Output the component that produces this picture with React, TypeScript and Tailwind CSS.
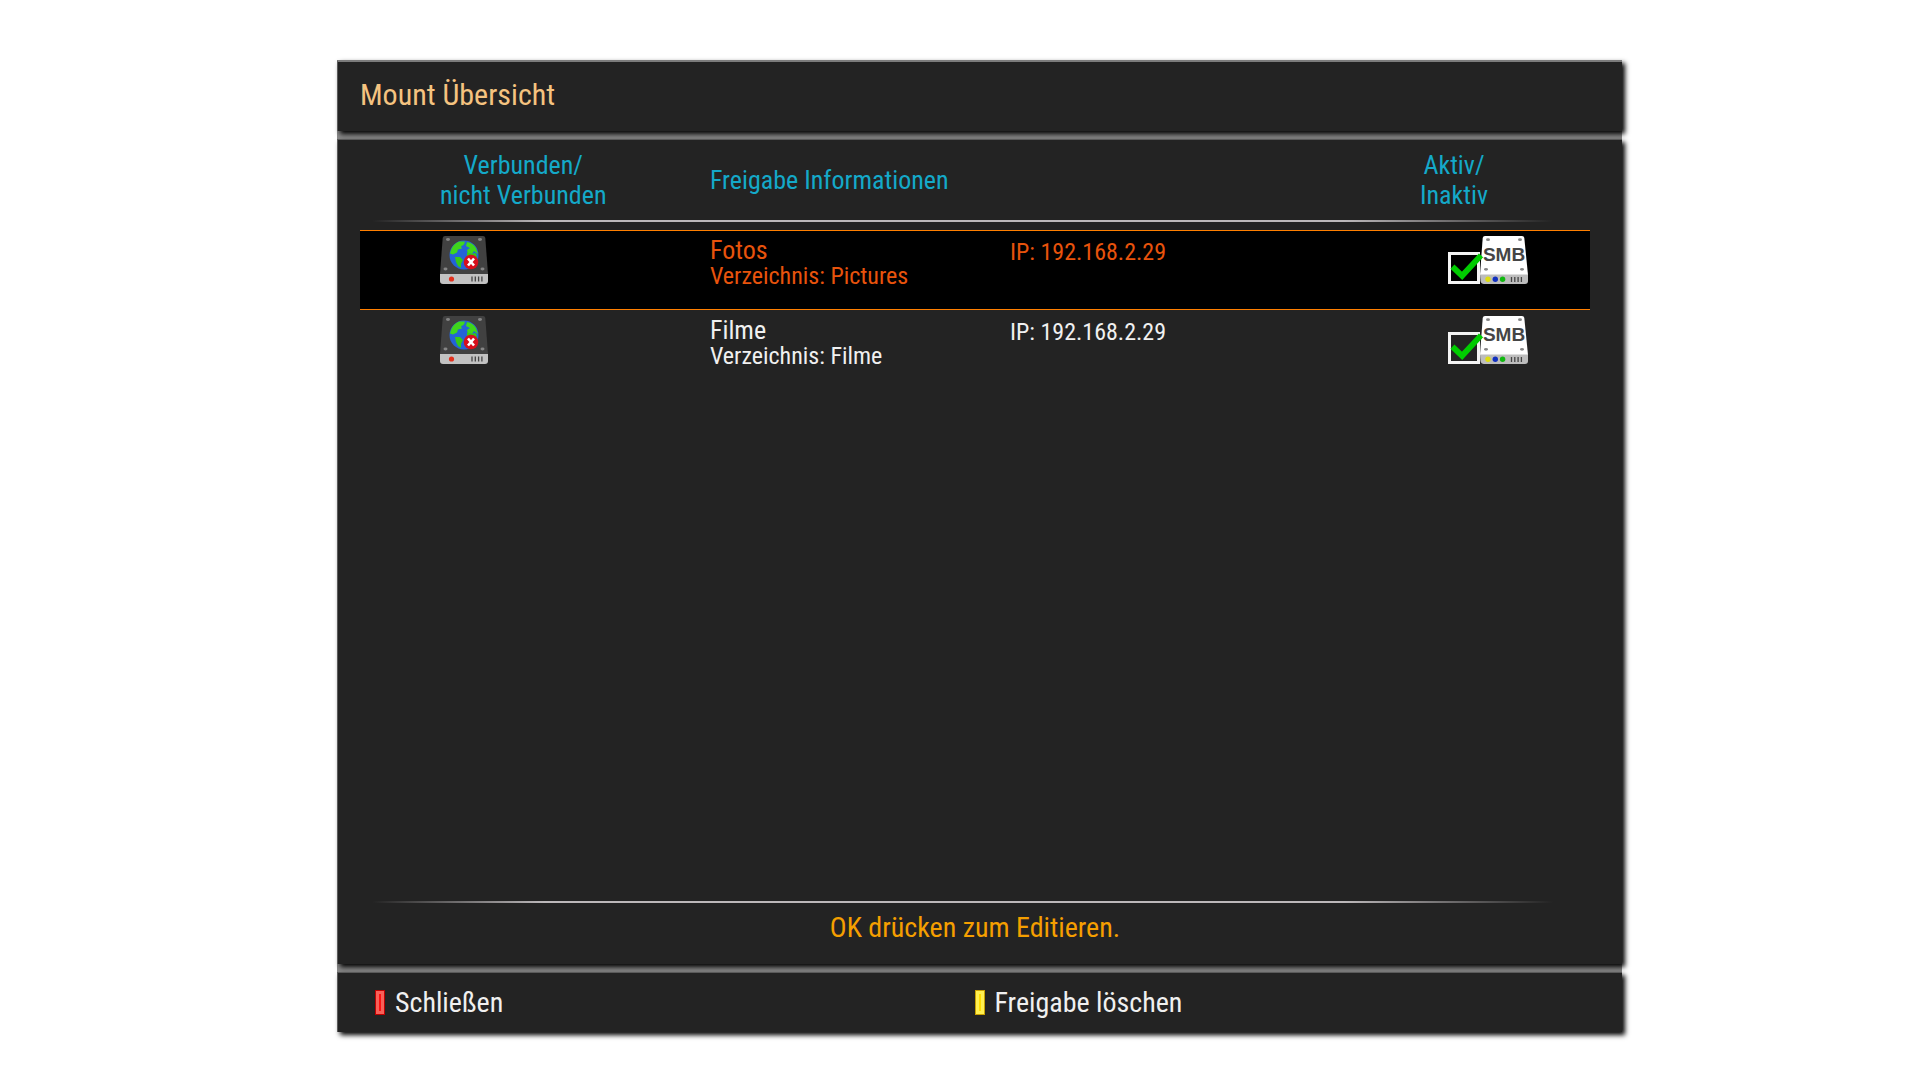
import clsx from 'clsx'
import { useState } from 'react'

const mounts = [
  { name: 'Fotos', directory: 'Pictures', ip: '192.168.2.29' },
  { name: 'Filme', directory: 'Filme', ip: '192.168.2.29' },
]

const panel =
  'relative bg-[#232323] border-l border-l-[#5a5a5a] shadow-[3px_3px_5px_0px_#000000]'

function DriveIcon() {
  return (
    <svg viewBox="0 0 48 48" className="block size-12" aria-label="Nicht verbunden" role="img">
      <path d="M5 0h38q2 0 2.3 2L48 38H0L2.7 2Q3 0 5 0z" fill="#414141" />
      <path d="M0 38h48v7q0 3-3 3H3q-3 0-3-3z" fill="#c2c2c2" />
      <g fill="#858585">
        <ellipse cx="8" cy="3.5" rx="2" ry="1.4" />
        <ellipse cx="40" cy="3.5" rx="2" ry="1.4" />
        <ellipse cx="5.5" cy="33" rx="2" ry="1.4" />
        <ellipse cx="42.5" cy="33" rx="2" ry="1.4" />
      </g>
      <circle cx="24" cy="19" r="14.5" fill="#2463d6" />
      <path d="M11 14q2-6 8-8.500l6 0-1 3-3 2 1 2-4 1-1 3-4 2-3-1z" fill="#3fd61c" />
      <path d="M27 6q6 1 9 6l2 6-4-3-2 3-4-1-1-3 3-2-4-2z" fill="#3fd61c" />
      <path d="M15 21l5 0 3 3-2 4 0 4-3-2-2-4z" fill="#36c818" />
      <path d="M27 16l4 2 5-1 1 4-6 3-4-4z" fill="#36c818" />
      <circle cx="31" cy="26" r="7.3" fill="#d80f1c" />
      <path d="M28 22.5l6 7M34 22.5l-6 7" stroke="#fff" strokeWidth="2.6" />
      <circle cx="11.5" cy="43" r="2.6" fill="#e3311d" />
      <path d="M32 40.5v5M35.3 40.5v5M38.6 40.5v5M41.9 40.5v5" stroke="#444" strokeWidth="1.3" />
    </svg>
  )
}

function SmbIcon() {
  return (
    <svg viewBox="0 0 48 48" className="block size-12" aria-label="SMB" role="img">
      <path d="M5 0h37q2 0 2.3 2L48 39H0L2.7 2Q3 0 5 0z" fill="#fff" />
      <path d="M0 38.5h48v6.5q0 3-3 3H4q-3 0-3.5-3z" fill="#bdbdbd" />
      <g fill="#858585">
        <ellipse cx="8" cy="3.7" rx="2" ry="1.4" />
        <ellipse cx="40" cy="3.7" rx="2" ry="1.4" />
        <ellipse cx="6" cy="33.3" rx="2" ry="1.4" />
        <ellipse cx="42" cy="33.3" rx="2" ry="1.4" />
      </g>
      <text x="24" y="25" textAnchor="middle" fontFamily="Liberation Sans, sans-serif" fontWeight="700" fontSize="19" fill="#454545">
        SMB
      </text>
      <circle cx="8" cy="43.3" r="2.7" fill="#dede10" />
      <circle cx="15.3" cy="43.3" r="2.7" fill="#1230c0" />
      <circle cx="22.6" cy="43.3" r="2.7" fill="#10b810" />
      <path d="M31.5 41v5M34.8 41v5M38.1 41v5M41.4 41v5" stroke="#444" strokeWidth="1.3" />
    </svg>
  )
}

function ActiveBox({ label }: { label: string }) {
  const [active, setActive] = useState(true)

  return (
    <span className="relative z-10 block size-8">
      <input
        type="checkbox"
        aria-label={label}
        checked={active}
        onChange={() => setActive(!active)}
        className="block size-full appearance-none border-[3px] border-[#f4f4f4]"
      />
      {active && (
        <svg viewBox="0 0 36 33" className="pointer-events-none absolute left-0 top-0 h-8 w-9">
          <path d="M4 15l10 9.500L33.500 3.500" fill="none" stroke="#00cc00" strokeWidth="6" />
        </svg>
      )}
    </span>
  )
}

export default function App() {
  const [selected, setSelected] = useState(0)

  return (
    <div className="flex min-h-screen flex-col bg-white pb-12 pl-[17.55%] pr-[15.52%] pt-15 font-['Roboto_Condensed',Roboto,sans-serif] text-[#f0f0f0]">
      <header className={clsx(panel, 'h-[71px] border-t-2 border-t-[#7c7c7c] pl-[22px] pt-[13px]')}>
        <h1 className="text-[30px] leading-10 text-[#f5c380]">Mount Übersicht</h1>
      </header>
      <div className="h-2 bg-[#8a8a8a]" />

      <main className={clsx(panel, 'flex flex-1 flex-col border-t border-t-[#5a5a5a] pl-[22px] pr-8')}>
        <table className="w-full table-fixed border-separate border-spacing-0 text-left">
          <colgroup>
            <col className="w-[28.45%]" />
            <col className="w-[24.4%]" />
            <col className="w-[33.33%]" />
            <col />
          </colgroup>
          <thead className="text-[26px] leading-[30px] text-[#14a9c9]">
            <tr className="h-[90px] bg-[linear-gradient(to_right,transparent_1%,#bcb8ba_15%,#bcb8ba_80%,transparent_97%)] bg-[length:100%_2px] bg-[position:0_80px] bg-no-repeat">
              <th className="p-0 pb-2.5 pl-20 font-normal">
                <span className="inline-block text-center">
                  Verbunden/
                  <br />
                  nicht Verbunden
                </span>
              </th>
              <th className="p-0 pb-2.5 font-normal" colSpan={2}>
                Freigabe Informationen
              </th>
              <th className="p-0 pb-2.5 font-normal">
                <span className="inline-block text-center">
                  Aktiv/
                  <br />
                  Inaktiv
                </span>
              </th>
            </tr>
          </thead>
          <tbody>
            {mounts.map((mount, index) => (
              <tr
                key={mount.name}
                onClick={() => setSelected(index)}
                className={clsx(
                  'h-20 *:border-y *:p-0 *:align-top',
                  index === selected
                    ? 'bg-black text-[#e8530c] *:border-[#ff7f00]'
                    : '*:border-transparent',
                )}
              >
                <td>
                  <div className="pl-20 pt-[5px]">
                    <DriveIcon />
                  </div>
                </td>
                <td>
                  <p className="pt-[5px] text-[26px] leading-7">{mount.name}</p>
                  <p className="text-2xl leading-6">Verzeichnis: {mount.directory}</p>
                </td>
                <td>
                  <p className="pt-[5px] text-2xl leading-8">IP: {mount.ip}</p>
                </td>
                <td>
                  <div className="flex items-end pl-7 pt-[5px]">
                    <ActiveBox label={`${mount.name} aktiv`} />
                    <SmbIcon />
                  </div>
                </td>
              </tr>
            ))}
          </tbody>
        </table>

        <div className="mt-auto pb-4">
          <div className="h-0.5 bg-[linear-gradient(to_right,transparent_1%,#bcb8ba_15%,#bcb8ba_80%,transparent_97%)]" />
          <p className="pt-[5px] text-center text-[28px] leading-10 text-[#f59f00]">OK drücken zum Editieren.</p>
        </div>
      </main>
      <div className="h-2 bg-[#8a8a8a]" />

      <footer className={clsx(panel, 'grid h-15 grid-cols-[600fr_648fr] items-center border-t border-t-[#5a5a5a] pl-[37px] text-[28px] leading-[38px]')}>
        <button type="button" className="flex items-center gap-2.5 justify-self-start">
          <span className="h-[25px] w-[10px] border border-[#c00000] bg-[#f86058] p-[3px]">
            <span className="block h-full bg-[#ff1010]" />
          </span>
          Schließen
        </button>
        <button type="button" className="flex items-center gap-2.5 justify-self-start">
          <span className="h-[25px] w-[10px] border border-[#c8a000] bg-[#fff050] p-[3px]">
            <span className="block h-full bg-[#ffdc00]" />
          </span>
          Freigabe löschen
        </button>
      </footer>
    </div>
  )
}
